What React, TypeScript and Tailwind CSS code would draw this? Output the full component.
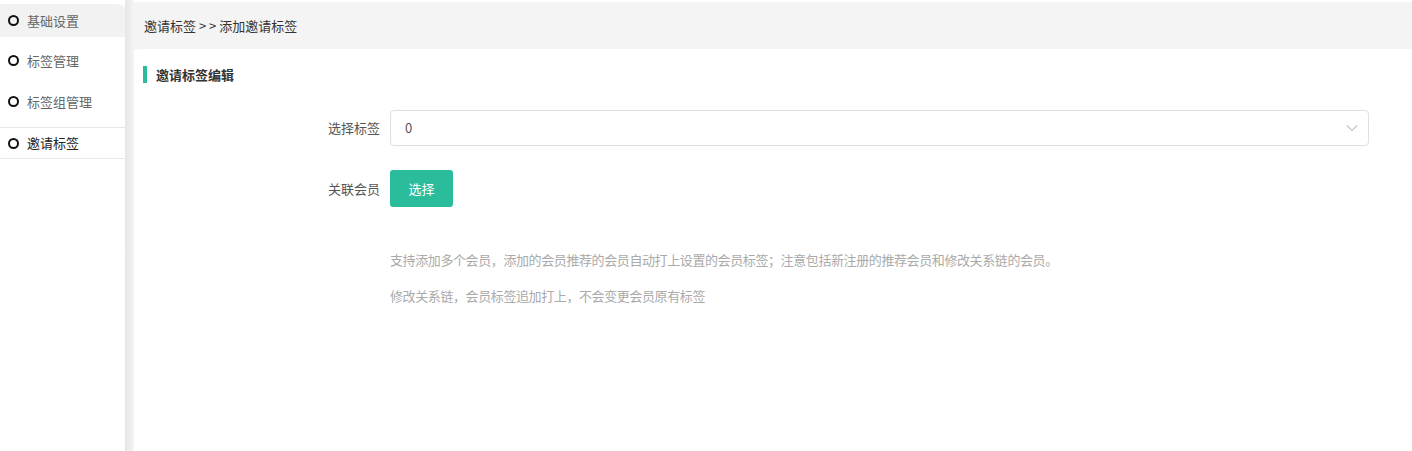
import React from "react";

const font = { fontFamily: '"Noto Sans CJK SC", "Noto Sans", sans-serif' };

function Item({ label, active, first }: { label: string; active?: boolean; first?: boolean }) {
  return (
    <div
      className={
        "flex items-center pl-[8px] " +
        (first ? "bg-[#f2f2f2] rounded-tr-[6px] mt-[4px] h-[33px]" : "h-[31px]") +
        (active ? " border-y border-[#e8e8e8] h-[32px]" : "")
      }
    >
      <span className="w-[11px] h-[11px] rounded-full border-[2px] border-[#111] mr-[8px] box-border" />
      <span className={"text-[13px] " + (active ? "text-[#222]" : "text-[#666]")}>{label}</span>
    </div>
  );
}

export default function App() {
  return (
    <div className="w-[1412px] h-[451px] flex bg-white overflow-hidden" style={font}>
      <div className="w-[125px] shrink-0 flex flex-col">
        <Item label="基础设置" first />
        <div className="h-[8px]" />
        <Item label="标签管理" />
        <div className="h-[10px]" />
        <Item label="标签组管理" />
        <div className="h-[10px]" />
        <Item label="邀请标签" active />
      </div>
      <div className="w-[9px] shrink-0 bg-gradient-to-r from-[#e6e6e6] to-[#f4f4f4]" />
      <div className="flex-1 flex flex-col pt-[2px] bg-white">
        <div className="h-[48px] bg-[#f4f4f4] flex items-center pl-[10px] text-[13px] text-[#333]">
          邀请标签 &gt; &gt; 添加邀请标签
        </div>
        <div className="flex-1 bg-white rounded-tl-[6px] -mt-[1px] pt-[17px] pl-[9px]">
          <div className="flex items-center h-[17px]">
            <span className="w-[4px] h-[17px] bg-[#2abc9b]" />
            <span className="ml-[9px] text-[13px] font-bold text-[#333]">邀请标签编辑</span>
          </div>
          <div className="mt-[27px] flex items-center">
            <div className="w-[247px] text-right pr-[10px] text-[13px] text-[#555]">选择标签</div>
            <div className="w-[979px] h-[36px] border border-[#dcdfe6] rounded-[4px] flex items-center justify-between pl-[14px] pr-[10px]">
              <span className="text-[13px] text-[#555]">0</span>
              <svg width="12" height="8" viewBox="0 0 12 8" fill="none">
                <path d="M1 1.5 L6 6.5 L11 1.5" stroke="#c0c4cc" strokeWidth="1.2" />
              </svg>
            </div>
          </div>
          <div className="mt-[24px] flex items-center">
            <div className="w-[247px] text-right pr-[10px] text-[13px] text-[#555]">关联会员</div>
            <button className="w-[63px] h-[37px] bg-[#2abc9b] text-white text-[13px] rounded-[3px]">选择</button>
          </div>
          <div className="ml-[247px] mt-[43px] text-[13px] text-[#aaa] leading-[20px] tracking-[-0.4px]">
            支持添加多个会员，添加的会员推荐的会员自动打上设置的会员标签；注意包括新注册的推荐会员和修改关系链的会员。
          </div>
          <div className="ml-[247px] mt-[16px] text-[13px] text-[#aaa] leading-[20px] tracking-[-0.4px]">
            修改关系链，会员标签追加打上，不会变更会员原有标签
          </div>
        </div>
      </div>
    </div>
  );
}
